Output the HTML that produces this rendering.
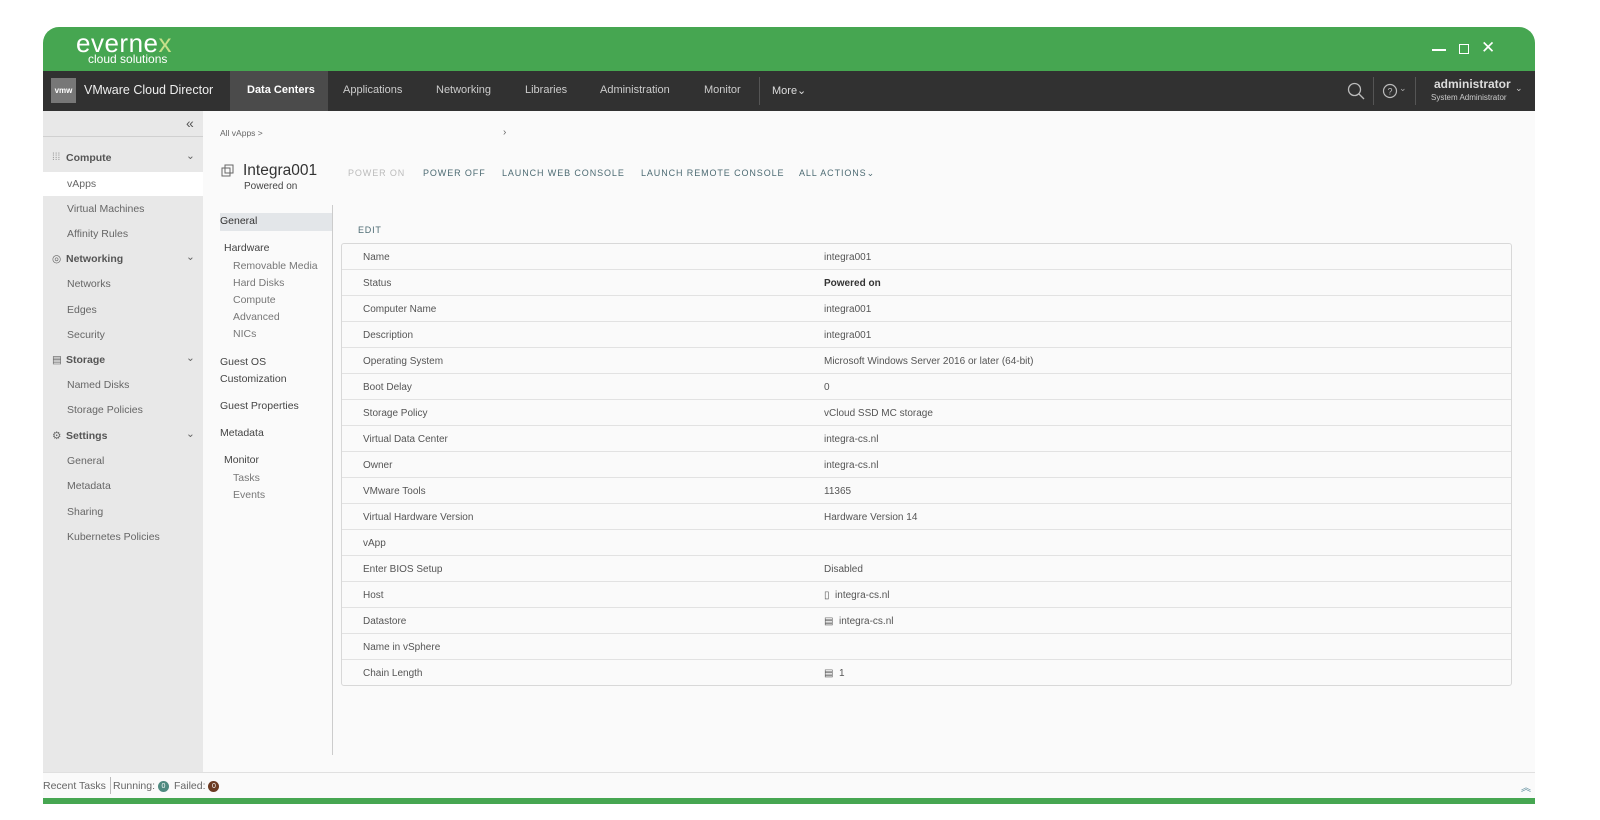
<!DOCTYPE html>
<html><head><meta charset="utf-8"><style>
*{box-sizing:border-box;margin:0;padding:0}
body{width:1600px;height:820px;background:#fff;font-family:"Liberation Sans",sans-serif;position:relative;overflow:hidden;color:#333}
.abs{position:absolute}
#green{left:43px;top:27px;width:1492px;height:44px;background:#46a651;border-radius:16px 16px 0 0}
#nav{left:43px;top:71px;width:1492px;height:40px;background:#313131;color:#ccc;font-size:11px}
#nav span{position:absolute;top:13px}
#side{left:43px;top:111px;width:160px;height:661px;background:#e8e8e8;font-size:10.5px;color:#666}
#side div{position:absolute;left:24px}
#side .h{left:23px;font-weight:bold;color:#555}
#main{left:203px;top:111px;width:1332px;height:661px;background:#fafafa}
.sub{font-size:10.5px;color:#555;position:absolute}
.act{position:absolute;top:168px;font-size:9px;letter-spacing:0.9px;color:#4d6b73}
#tbl{left:341px;top:243px;width:1171px;height:443px;border:1px solid #d8d8d8;border-radius:3px;background:#fafafa}
.row{position:absolute;left:0;width:1169px;height:26px;border-bottom:1px solid #e2e2e2;font-size:10px;color:#555}
.row .k{position:absolute;left:21px;top:8px}
.row .v{position:absolute;left:482px;top:8px}
#foot{left:43px;top:772px;width:1492px;height:26px;background:#fafafa;border-top:1px solid #e0e0e0;font-size:10.5px;color:#666}
.badge{display:inline-block;width:11px;height:11px;border-radius:50%;color:#fff;font-size:7px;text-align:center;line-height:11px;vertical-align:middle}
</style></head><body>
<div id="green" class="abs">
 <div class="abs" style="left:33px;top:1px;color:#fff;font-size:26px;letter-spacing:0.5px">everne<span style="color:#c6e089">x</span></div>
 <div class="abs" style="left:45px;top:25px;color:#fff;font-size:12px">cloud solutions</div>
 <div class="abs" style="left:1389px;top:22px;width:14px;height:1.5px;background:#fff"></div>
 <div class="abs" style="left:1416px;top:17px;width:10px;height:10px;border:1.5px solid #fff"></div>
 <div class="abs" style="left:1438px;top:11px;color:#fff;font-size:17px">✕</div>
</div>
<div id="nav" class="abs">
 <div class="abs" style="left:8px;top:7px;width:25px;height:25px;background:#777;color:#fff;font-size:8px;font-weight:bold;text-align:center;line-height:25px">vmw</div>
 <span style="left:41px;top:12px;font-size:12.5px;color:#eee">VMware Cloud Director</span>
 <div class="abs" style="left:187px;top:0;width:98px;height:40px;background:#4b4b4b"></div>
 <span style="left:204px;color:#fff;font-weight:bold">Data Centers</span>
 <span style="left:300px">Applications</span>
 <span style="left:393px">Networking</span>
 <span style="left:482px">Libraries</span>
 <span style="left:557px">Administration</span>
 <span style="left:661px">Monitor</span>
 <div class="abs" style="left:716px;top:6px;width:1px;height:28px;background:#555"></div>
 <span style="left:729px;color:#ddd">More⌄</span>
 <svg class="abs" style="left:1304px;top:11px" width="18" height="18"><circle cx="7.5" cy="7.5" r="6" fill="none" stroke="#bbb" stroke-width="1.3"/><path d="M12 12l5 5" stroke="#bbb" stroke-width="1.3"/></svg>
 <div class="abs" style="left:1330px;top:6px;width:1px;height:28px;background:#555"></div>
 <svg class="abs" style="left:1339px;top:12px" width="16" height="16"><circle cx="8" cy="8" r="6.5" fill="none" stroke="#bbb" stroke-width="1.2"/><text x="8" y="11.5" font-size="9" fill="#bbb" text-anchor="middle" font-family="Liberation Sans">?</text></svg>
 <span style="left:1356px;top:12px;color:#aaa;font-size:9px">⌄</span>
 <div class="abs" style="left:1372px;top:6px;width:1px;height:28px;background:#555"></div>
 <span style="left:1391px;top:6px;font-size:12px;color:#ddd;font-weight:bold">administrator</span>
 <span style="left:1388px;top:22px;font-size:8px;color:#ccc">System Administrator</span>
 <span style="left:1472px;top:12px;font-size:9px">⌄</span>
</div>
<div id="side" class="abs">
 <div style="left:143px;top:4px;font-size:14px;color:#555">«</div>
 <div style="left:0;top:25px;width:160px;height:1px;background:#d0d0d0"></div>
 <div style="left:9px;top:41px;font-size:10px;color:#999">⁞⁞⁞</div>
 <div class="h" style="top:41px">Compute</div><div style="left:143px;top:39px">⌄</div>
 <div style="left:0;top:61px;width:160px;height:24px;background:#fff"></div>
 <div style="top:67px">vApps</div>
 <div style="top:92px">Virtual Machines</div>
 <div style="top:117px">Affinity Rules</div>
 <div style="left:9px;top:142px">◎</div><div class="h" style="top:142px">Networking</div><div style="left:143px;top:140px">⌄</div>
 <div style="top:167px">Networks</div>
 <div style="top:193px">Edges</div>
 <div style="top:218px">Security</div>
 <div style="left:9px;top:243px">▤</div><div class="h" style="top:243px">Storage</div><div style="left:143px;top:241px">⌄</div>
 <div style="top:268px">Named Disks</div>
 <div style="top:293px">Storage Policies</div>
 <div style="left:9px;top:319px">⚙</div><div class="h" style="top:319px">Settings</div><div style="left:143px;top:317px">⌄</div>
 <div style="top:344px">General</div>
 <div style="top:369px">Metadata</div>
 <div style="top:395px">Sharing</div>
 <div style="top:420px">Kubernetes Policies</div>
</div>
<div id="main" class="abs"></div>
<div class="abs" style="left:220px;top:128px;font-size:8.5px;color:#666">All vApps &gt;</div>
<div class="abs" style="left:503px;top:127px;font-size:10px;color:#666">›</div>
<svg class="abs" style="left:221px;top:164px" width="14" height="14"><rect x="1" y="4" width="8" height="8" fill="none" stroke="#666"/><rect x="4" y="1" width="8" height="8" fill="none" stroke="#666"/></svg>
<div class="abs" style="left:243px;top:162px;font-size:15.5px;color:#333">Integra001</div>
<div class="abs" style="left:244px;top:181px;font-size:10px;color:#444">Powered on</div>
<div class="act" style="left:348px;color:#bbb">POWER ON</div>
<div class="act" style="left:423px">POWER OFF</div>
<div class="act" style="left:502px">LAUNCH WEB CONSOLE</div>
<div class="act" style="left:641px">LAUNCH REMOTE CONSOLE</div>
<div class="act" style="left:799px">ALL ACTIONS⌄</div>
<div class="abs" style="left:332px;top:205px;width:1px;height:550px;background:#ccc"></div>
<div class="abs" style="left:220px;top:213px;width:112px;height:18px;background:#e3e6e9"></div>
<div class="sub" style="left:220px;top:215px;color:#333">General</div>
<div class="sub" style="left:224px;top:242px;color:#444">Hardware</div>
<div class="sub" style="left:233px;top:260px;color:#777">Removable Media</div>
<div class="sub" style="left:233px;top:277px;color:#777">Hard Disks</div>
<div class="sub" style="left:233px;top:294px;color:#777">Compute</div>
<div class="sub" style="left:233px;top:311px;color:#777">Advanced</div>
<div class="sub" style="left:233px;top:328px;color:#777">NICs</div>
<div class="sub" style="left:220px;top:356px;color:#444">Guest OS</div>
<div class="sub" style="left:220px;top:373px;color:#444">Customization</div>
<div class="sub" style="left:220px;top:400px;color:#444">Guest Properties</div>
<div class="sub" style="left:220px;top:427px;color:#444">Metadata</div>
<div class="sub" style="left:224px;top:454px;color:#444">Monitor</div>
<div class="sub" style="left:233px;top:472px;color:#777">Tasks</div>
<div class="sub" style="left:233px;top:489px;color:#777">Events</div>
<div class="abs" style="left:358px;top:225px;font-size:9px;letter-spacing:0.8px;color:#4d6b73">EDIT</div>
<div id="tbl" class="abs">
<div class="row" style="top:0"><span class="k">Name</span><span class="v">integra001</span></div>
<div class="row" style="top:26px"><span class="k">Status</span><span class="v" style="font-weight:bold;color:#333">Powered on</span></div>
<div class="row" style="top:52px"><span class="k">Computer Name</span><span class="v">integra001</span></div>
<div class="row" style="top:78px"><span class="k">Description</span><span class="v">integra001</span></div>
<div class="row" style="top:104px"><span class="k">Operating System</span><span class="v">Microsoft Windows Server 2016 or later (64-bit)</span></div>
<div class="row" style="top:130px"><span class="k">Boot Delay</span><span class="v">0</span></div>
<div class="row" style="top:156px"><span class="k">Storage Policy</span><span class="v">vCloud SSD MC storage</span></div>
<div class="row" style="top:182px"><span class="k">Virtual Data Center</span><span class="v">integra-cs.nl</span></div>
<div class="row" style="top:208px"><span class="k">Owner</span><span class="v">integra-cs.nl</span></div>
<div class="row" style="top:234px"><span class="k">VMware Tools</span><span class="v">11365</span></div>
<div class="row" style="top:260px"><span class="k">Virtual Hardware Version</span><span class="v">Hardware Version 14</span></div>
<div class="row" style="top:286px"><span class="k">vApp</span></div>
<div class="row" style="top:312px"><span class="k">Enter BIOS Setup</span><span class="v">Disabled</span></div>
<div class="row" style="top:338px"><span class="k">Host</span><span class="v">▯ &nbsp;integra-cs.nl</span></div>
<div class="row" style="top:364px"><span class="k">Datastore</span><span class="v">▤ &nbsp;integra-cs.nl</span></div>
<div class="row" style="top:390px"><span class="k">Name in vSphere</span></div>
<div class="row" style="top:416px;border-bottom:none"><span class="k">Chain Length</span><span class="v">▤ &nbsp;1</span></div>
</div>
<div id="foot" class="abs">
 <span class="abs" style="left:0;top:7px">Recent Tasks</span>
 <div class="abs" style="left:67px;top:4px;width:1px;height:17px;background:#bbb"></div>
 <span class="abs" style="left:70px;top:7px">Running: <span class="badge" style="background:#4f8a80">0</span></span>
 <span class="abs" style="left:131px;top:7px">Failed: <span class="badge" style="background:#6b3a22">0</span></span>
 <span class="abs" style="left:1478px;top:6px;color:#5a8a9a;font-size:10px">︽</span>
</div>
<div class="abs" style="left:43px;top:798px;width:1492px;height:6px;background:#46a651"></div>
</body></html>
